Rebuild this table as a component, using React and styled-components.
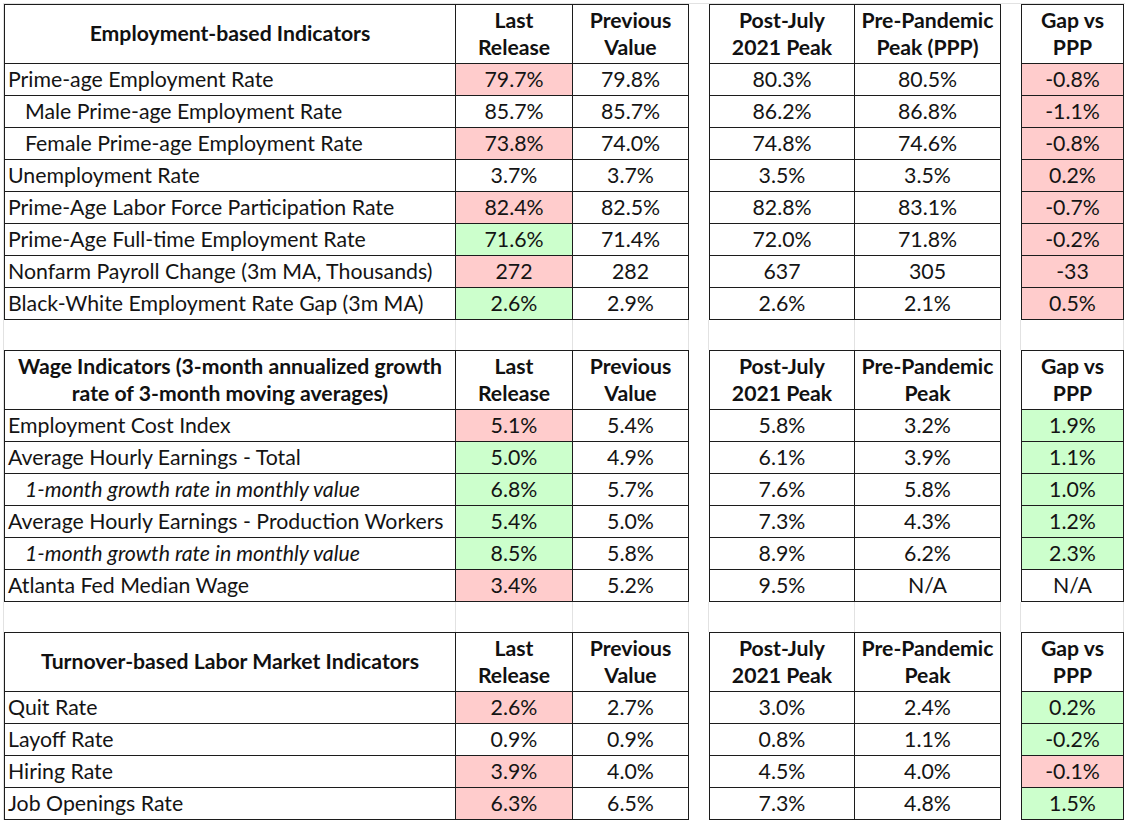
import React from "react";
import styled, { createGlobalStyle, css } from "styled-components";

const Global = createGlobalStyle`
  html, body { margin: 0; padding: 0; background: #ffffff; }
  body { font-family: "Lato", "Open Sans", sans-serif; color: #141414; }
`;

const COLS = "452px 117px 116px 20px 146px 146px 20px 103px";
const INK = "#1c1c1c";
const GRID = "#e2e2e2";

const FILLS = { red: "#ffcccc", green: "#ccffcc", none: "#ffffff" };

const Sheet = styled.div`
  margin: 3px 0 0 3px;
  border-top: 1px solid ${GRID};
  border-left: 1px solid ${GRID};
  display: flex;
  flex-direction: column;
  width: 1121px;
`;

const Section = styled.div`
  display: grid;
  grid-template-columns: ${COLS};
  grid-template-rows: 60px repeat(${(p) => p.$rows}, 32px);
`;

const SpacerRow = styled.div`
  display: grid;
  grid-template-columns: ${COLS};
  height: 30px;
`;

const SpacerCell = styled.div`
  box-sizing: border-box;
  border-right: 1px solid ${GRID};
`;

const Gap = styled.div`
  background: #ffffff;
`;

const cellBase = css`
  box-sizing: border-box;
  display: flex;
  align-items: center;
  border-right: 1px solid ${INK};
  border-bottom: 1px solid ${INK};
  border-left: ${(p) => (p.$lead ? `1px solid ${INK}` : "none")};
  font-size: 21.3px;
  white-space: nowrap;
  overflow: hidden;
`;

const HeadCell = styled.div`
  ${cellBase};
  border-top: 1px solid ${INK};
  justify-content: center;
  text-align: center;
  font-weight: 700;
  font-size: 21.2px;
  line-height: 27px;
  padding: 0 0 1px;
  color: #111;
`;

const LabelCell = styled.div`
  ${cellBase};
  justify-content: flex-start;
  padding-left: ${(p) => (p.$indent ? "20px" : "3px")};
  padding-bottom: 2px;
  font-style: ${(p) => (p.$italic ? "italic" : "normal")};
`;

const ValueCell = styled.div`
  ${cellBase};
  justify-content: center;
  padding-bottom: 2px;
  background: ${(p) => FILLS[p.$fill || "none"]};
`;

const sections = [
  {
    title: ["Employment-based Indicators"],
    ppp: ["Pre-Pandemic", "Peak (PPP)"],
    rows: [
      ["Prime-age Employment Rate", "79.7%", "red", "79.8%", "80.3%", "80.5%", "-0.8%", "red"],
      ["Male Prime-age Employment Rate", "85.7%", "none", "85.7%", "86.2%", "86.8%", "-1.1%", "red", "indent"],
      ["Female Prime-age Employment Rate", "73.8%", "red", "74.0%", "74.8%", "74.6%", "-0.8%", "red", "indent"],
      ["Unemployment Rate", "3.7%", "none", "3.7%", "3.5%", "3.5%", "0.2%", "red"],
      ["Prime-Age Labor Force Participation Rate", "82.4%", "red", "82.5%", "82.8%", "83.1%", "-0.7%", "red"],
      ["Prime-Age Full-time Employment Rate", "71.6%", "green", "71.4%", "72.0%", "71.8%", "-0.2%", "red"],
      ["Nonfarm Payroll Change (3m MA, Thousands)", "272", "red", "282", "637", "305", "-33", "red"],
      ["Black-White Employment Rate Gap (3m MA)", "2.6%", "green", "2.9%", "2.6%", "2.1%", "0.5%", "red"],
    ],
  },
  {
    title: ["Wage Indicators (3-month annualized growth", "rate of 3-month moving averages)"],
    ppp: ["Pre-Pandemic", "Peak"],
    rows: [
      ["Employment Cost Index", "5.1%", "red", "5.4%", "5.8%", "3.2%", "1.9%", "green"],
      ["Average Hourly Earnings - Total", "5.0%", "green", "4.9%", "6.1%", "3.9%", "1.1%", "green"],
      ["1-month growth rate in monthly value", "6.8%", "green", "5.7%", "7.6%", "5.8%", "1.0%", "green", "italic"],
      ["Average Hourly Earnings - Production Workers", "5.4%", "green", "5.0%", "7.3%", "4.3%", "1.2%", "green"],
      ["1-month growth rate in monthly value", "8.5%", "green", "5.8%", "8.9%", "6.2%", "2.3%", "green", "italic"],
      ["Atlanta Fed Median Wage", "3.4%", "red", "5.2%", "9.5%", "N/A", "N/A", "none"],
    ],
  },
  {
    title: ["Turnover-based Labor Market Indicators"],
    ppp: ["Pre-Pandemic", "Peak"],
    rows: [
      ["Quit Rate", "2.6%", "red", "2.7%", "3.0%", "2.4%", "0.2%", "green"],
      ["Layoff Rate", "0.9%", "none", "0.9%", "0.8%", "1.1%", "-0.2%", "green"],
      ["Hiring Rate", "3.9%", "red", "4.0%", "4.5%", "4.0%", "-0.1%", "red"],
      ["Job Openings Rate", "6.3%", "red", "6.5%", "7.3%", "4.8%", "1.5%", "green"],
    ],
  },
];

const Lines = ({ parts }) => (
  <span>
    {parts.map((p, i) => (
      <React.Fragment key={i}>
        {i > 0 && <br />}
        {p}
      </React.Fragment>
    ))}
  </span>
);

function Spacer() {
  return (
    <SpacerRow>
      {Array.from({ length: 8 }).map((_, i) => (
        <SpacerCell key={i} />
      ))}
    </SpacerRow>
  );
}

function Block({ data }) {
  return (
    <Section $rows={data.rows.length}>
      <HeadCell $lead>
        <Lines parts={data.title} />
      </HeadCell>
      <HeadCell>
        <Lines parts={["Last", "Release"]} />
      </HeadCell>
      <HeadCell>
        <Lines parts={["Previous", "Value"]} />
      </HeadCell>
      <Gap />
      <HeadCell $lead>
        <Lines parts={["Post-July", "2021 Peak"]} />
      </HeadCell>
      <HeadCell>
        <Lines parts={data.ppp} />
      </HeadCell>
      <Gap />
      <HeadCell $lead>
        <Lines parts={["Gap vs", "PPP"]} />
      </HeadCell>
      {data.rows.map((r, i) => {
        const [label, last, lastFill, prev, post, pre, gap, gapFill, kind] = r;
        return (
          <React.Fragment key={i}>
            <LabelCell $lead $indent={kind === "indent" || kind === "italic"} $italic={kind === "italic"}>
              {label}
            </LabelCell>
            <ValueCell $fill={lastFill}>{last}</ValueCell>
            <ValueCell>{prev}</ValueCell>
            <Gap />
            <ValueCell $lead>{post}</ValueCell>
            <ValueCell>{pre}</ValueCell>
            <Gap />
            <ValueCell $lead $fill={gapFill}>{gap}</ValueCell>
          </React.Fragment>
        );
      })}
    </Section>
  );
}

export default function App() {
  return (
    <>
      <Global />
      <Sheet>
        <Block data={sections[0]} />
        <Spacer />
        <Block data={sections[1]} />
        <Spacer />
        <Block data={sections[2]} />
      </Sheet>
    </>
  );
}
